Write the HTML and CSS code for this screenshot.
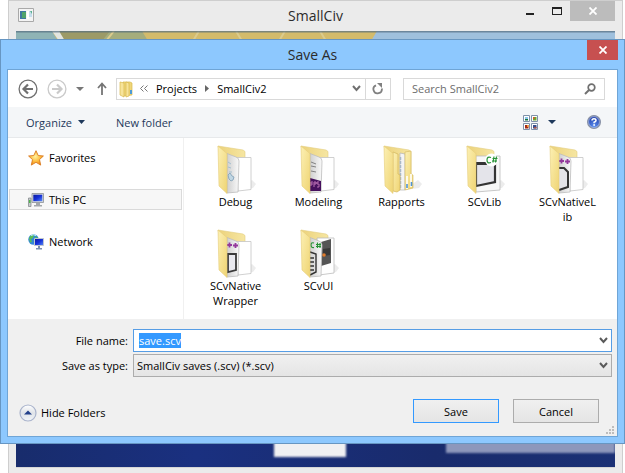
FILE: index.html
```html
<!DOCTYPE html>
<html lang="en">
<head>
<meta charset="utf-8">
<title>SmallCiv</title>
<link rel="stylesheet" href="styles.css">
</head>
<body>
<svg class="defs" aria-hidden="true">
  <defs>
    <linearGradient id="leaf" x1="0" y1="0" x2="1" y2="1"><stop offset="0" stop-color="#fcf0b4"/><stop offset="1" stop-color="#efd473"/></linearGradient>
    <linearGradient id="back" x1="0" y1="0" x2="1" y2="0"><stop offset="0" stop-color="#ecd27b"/><stop offset="1" stop-color="#f6e6a2"/></linearGradient>
    <linearGradient id="shade" x1="0" y1="0" x2="1" y2="0"><stop offset="0" stop-color="#cfcfcf"/><stop offset="1" stop-color="#fafafa"/></linearGradient>
    <linearGradient id="screen" x1="0" y1="0" x2="1" y2="1"><stop offset="0" stop-color="#0a1a9c"/><stop offset=".5" stop-color="#1530d8"/><stop offset="1" stop-color="#5b8cf5"/></linearGradient>
    <radialGradient id="star" cx=".45" cy=".4" r=".6"><stop offset="0" stop-color="#fff3a0"/><stop offset=".6" stop-color="#fdbb3c"/><stop offset="1" stop-color="#f08a1c"/></radialGradient>
    <radialGradient id="help" cx=".5" cy=".8" r=".8"><stop offset="0" stop-color="#5a8df0"/><stop offset="1" stop-color="#1b36a0"/></radialGradient>
    <linearGradient id="round" x1="0" y1="0" x2="0" y2="1"><stop offset="0" stop-color="#ffffff"/><stop offset=".5" stop-color="#dfe3e8"/><stop offset="1" stop-color="#f2f5f8"/></linearGradient>
    <g id="folder-back">
      <path d="M22 46 37 44 40 40 36 36z" fill="#ececec"/>
      <path d="M2 2 27 6 29 7.500V44L11 46z" fill="url(#back)" stroke="#e3cd7e" stroke-width=".6"/>
    </g>
    <path id="folder-leaf" d="M2 2 11 9.500V49.500L3 42z" fill="url(#leaf)" stroke="#e5cd79" stroke-width=".6"/>
    <g id="sheet-right"><path d="M19 13.500H35V45.500L22 47z" fill="#fff" stroke="#c4c4c4" stroke-width=".8"/></g>
    <path id="sheet-mid" d="M11 9.500 20 13Q23 14 23 17L22 48 11 49z" fill="url(#shade)" stroke="#bcbcbc" stroke-width=".8"/>
    <g id="pluses" stroke="#93399c" stroke-width="1.800"><path d="M11 17h5M13.500 14.500v5M17 17.500h5M19.500 15v5"/></g>
  </defs>
</svg>

<main class="app-window">
  <header class="app-title">
    <svg width="16" height="14" viewBox="0 0 16 14" aria-hidden="true"><path d="M.5.500h15v13H.500z" fill="#f4f4f4" stroke="#a9a9a9"/><path d="M2 3h6v8H2z" fill="#3e76a0"/><path d="M4 4h4v6H4z" fill="#4fa36a"/><path d="M9 3h2v8H9z" fill="#fff"/><path d="M11 3h3v6h-3z" fill="#c5ddec"/><path d="M12 3h2v3z" fill="#58b08e"/></svg>
    <h1>SmallCiv</h1>
    <div class="window-buttons">
      <button type="button" aria-label="Minimize"><svg width="10" height="10" viewBox="0 0 10 10"><path d="M1 7h8v2H1z" fill="#222"/></svg></button>
      <button type="button" aria-label="Maximize"><svg width="10" height="10" viewBox="0 0 10 10"><path d="M0 1h10v8H0zM1 3v5h8V3z" fill="#222" fill-rule="evenodd"/></svg></button>
      <button type="button" class="close muted" aria-label="Close"><svg width="8" height="8" viewBox="0 0 8 8"><path d="M.500.500 7.500 7.500M7.500.500.500 7.500" stroke="#fff" stroke-width="1.800"/></svg></button>
    </div>
  </header>
  <div class="game">
    <div class="terrain">
      <svg width="100%" height="10" viewBox="0 0 599 10" preserveAspectRatio="none" aria-hidden="true">
        <path d="M0 0h599v10H0z" fill="#9fc0dd"/><path d="M0 0h361l-6 10H0z" fill="#d3bb6b"/><path d="M90 0h36l6 10H84z" fill="#a5ad7c"/><path d="M44 0h50l-8 10H44z" fill="#9c9a67"/><path d="M0 0h36l6 10H0z" fill="#8fb3b5"/><path d="M36 0h7l6 10h-6z" fill="#e3e5e0"/><path d="M98 0 90 10M183 0l-6 10M269 0l-6 10M220 0l6 10M304 0l6 10" stroke="#dccb8c" stroke-width="2"/>
        <path d="M0 0h599v1.500H0z" fill="#556e80" opacity=".7"/>
      </svg>
    </div>
    <div class="sea"><span class="panel caption"></span><span class="panel status"></span></div>
  </div>
</main>

<section class="dialog" role="dialog" aria-labelledby="dialog-title">
  <header class="dialog-title">
    <h2 id="dialog-title">Save As</h2>
    <button type="button" class="close" aria-label="Close"><svg width="8" height="8" viewBox="0 0 8 8"><path d="M.500.500 7.500 7.500M7.500.500.500 7.500" stroke="#fff" stroke-width="1.800"/></svg></button>
  </header>
  <form class="content">
    <nav class="location">
      <button type="button" class="plain" aria-label="Back"><svg width="20" height="20" viewBox="0 0 20 20" fill="none" stroke="#707070"><circle cx="10" cy="10" r="8.900" stroke-width="1.300"/><path d="M15 10H6M10 5.500 5.500 10l4.500 4.500" stroke-width="2.200"/></svg></button>
      <button type="button" class="plain" aria-label="Forward"><svg width="20" height="20" viewBox="0 0 20 20" fill="none" stroke="#cacaca"><circle cx="10" cy="10" r="8.900" stroke-width="1.300"/><path d="M5 10h9M10 5.500l4.500 4.500-4.500 4.500" stroke-width="2.200"/></svg></button>
      <button type="button" class="plain" aria-label="Recent locations"><svg width="8" height="4" viewBox="0 0 8 4"><path d="M0 0h8L4 4z" fill="#777"/></svg></button>
      <button type="button" class="plain" aria-label="Up"><svg width="10" height="14" viewBox="0 0 10 14" fill="none" stroke="#757575" stroke-width="1.800"><path d="M5 13V2M1 6l4-4.500L9 6"/></svg></button>
      <div class="address">
        <svg width="15" height="18" viewBox="0 0 15 18" aria-hidden="true"><path d="M4 2h7l2 1v12l-9 1z" fill="#efd679" stroke="#d8b94d" stroke-width=".7"/><path d="M1 2 5 3v14l-4-2zM7 2l3 1v13l-3 1z" fill="#f7e49a" stroke="#d8b94d" stroke-width=".7"/><path d="M11 10h2v4h-2z" fill="#4d9ad5"/></svg>
        <svg class="chevrons" width="8" height="7" viewBox="0 0 8 7" fill="none" stroke="#777" aria-hidden="true"><path d="M3.500.500l-3 3 3 3M7.500.500l-3 3 3 3"/></svg>
        <a href="#projects">Projects</a>
        <svg width="4" height="7" viewBox="0 0 4 7" aria-hidden="true"><path d="M0 0 4 3.500 0 7z" fill="#666"/></svg>
        <a href="#smallciv2">SmallCiv2</a>
        <button type="button" class="plain history" aria-label="Previous locations"><svg width="9" height="7" viewBox="0 0 9 7" fill="none" stroke="#707070" stroke-width="2"><path d="M1 1l3.500 4L8 1"/></svg></button>
        <button type="button" class="plain refresh" aria-label="Refresh"><svg width="12" height="12" viewBox="0 0 12 12" fill="none"><path d="M4 2.300A4.200 4.200 0 1 0 9.800 5.500" stroke="#808080" stroke-width="1.800"/><path d="M5 0h5v5z" fill="#808080"/></svg></button>
      </div>
      <div class="search">
        <input type="search" placeholder="Search SmallCiv2" aria-label="Search SmallCiv2">
        <svg width="12" height="12" viewBox="0 0 12 12" fill="none" stroke="#707070" aria-hidden="true"><circle cx="7.500" cy="4.500" r="3.300" stroke-width="1.700"/><path d="M5 7 1 11" stroke-width="2"/></svg>
      </div>
    </nav>

    <div class="toolbar">
      <button type="button" class="plain">Organize <svg width="7" height="4" viewBox="0 0 7 4"><path d="M0 0h7L3.500 4z" fill="#1e395b"/></svg></button>
      <button type="button" class="plain">New folder</button>
      <span class="spacer"></span>
      <button type="button" class="plain view" aria-label="Change view">
        <svg width="15" height="15" viewBox="0 0 15 15"><path d="M.500.500h6v6h-6zM8.500.500h6v6h-6zM.500 8.500h6v6h-6zM8.500 8.500h6v6h-6z" fill="#fff" stroke="#7f91aa"/><path d="M2 2h3v2H2z" fill="#8bc5e8"/><path d="M2 4h3v1.500H2z" fill="#17743b"/><path d="M10 2h3.500v3.500H10z" fill="#6ca832"/><path d="M10 2h1.500v2H10z" fill="#d4562c"/><path d="M2 10h3.500v3.500H2z" fill="#a42917"/><path d="M4 10h1.500v2H4z" fill="#f09a31"/><path d="M10 10h3.500v3.500H10z" fill="#3a4d8c"/><path d="M11 12h2.500v1.500H11z" fill="#a54d45"/></svg>
        <svg width="8" height="4" viewBox="0 0 8 4"><path d="M0 0h8L4 4z" fill="#1e395b"/></svg>
      </button>
      <button type="button" class="plain" aria-label="Help"><svg width="14" height="14" viewBox="0 0 14 14"><circle cx="7" cy="7" r="6.400" fill="url(#help)" stroke="#8b93a5" stroke-width="1.200"/><circle cx="7" cy="7" r="5.400" fill="none" stroke="#c4d2ee" stroke-width=".6"/><path d="M5 5.500Q5 3.700 7 3.700T9 5.400Q9 6.400 7.100 7.300v1" fill="none" stroke="#fff" stroke-width="1.500"/><circle cx="7.100" cy="10" r=".9" fill="#fff"/></svg></button>
    </div>

    <div class="browser">
      <ul class="places">
        <li><a href="#favorites"><svg width="16" height="16" viewBox="0 0 16 16"><path d="M8 .700 10.200 5.500l5.200.500-3.900 3.600 1.200 5.500L8 12.300l-4.700 2.800 1.200-5.500L.600 6l5.200-.500z" fill="url(#star)" stroke="#d97a20" stroke-width=".9"/></svg>Favorites</a></li>
        <li><a href="#pc" class="current"><svg width="16" height="16" viewBox="0 0 16 16"><path d="M4 1.500h11.500v9H4z" fill="#d5d8dc" stroke="#8c9196" stroke-width=".8"/><path d="M5.300 2.700h9v6.500h-9z" fill="url(#screen)"/><path d="M8 11h4v2H8zM6 13h8v1.500H6z" fill="#a3a7ab"/><path d="M.500 6H3v8.500H.500z" fill="#c7cacd" stroke="#7d8185" stroke-width=".7"/><path d="M1 8h1.500v3H1z" fill="#4fb54b"/></svg>This PC</a></li>
        <li><a href="#network"><svg width="16" height="16" viewBox="0 0 16 16"><circle cx="5.500" cy="5.500" r="5.200" fill="#3287d8"/><path d="M1 4Q3 0 6 1L5 4 3 5 4 8 2 8.500zM7 2l3 2-2 3z" fill="#58bd55"/><path d="M3 1.500Q5 0 8 1.500" stroke="#cbefff" fill="none"/><path d="M6.500 4.500h9v7h-9z" fill="url(#screen)" stroke="#c0c6cf"/><path d="M10 12h2v2h-2zM8 14h6v1.500H8z" fill="#7c8fae"/></svg>Network</a></li>
      </ul>
      <ul class="files">
        <li><a href="#debug"><svg width="40" height="50" viewBox="0 0 40 50"><use href="#folder-back"/><use href="#sheet-right"/><use href="#sheet-mid"/><path d="M12 18l3 2M12 23l3 1M13 28h3" stroke="#a4bfd0"/><path d="M12 31l2-2 2 3 2 1-1 3-2 1-2-2z" fill="#c0d6e3" stroke="#7d9eb5" stroke-width=".8"/><use href="#folder-leaf"/></svg>Debug</a></li>
        <li><a href="#modeling"><svg width="40" height="50" viewBox="0 0 40 50"><use href="#folder-back"/><use href="#sheet-right"/><use href="#sheet-mid"/><path d="M12 18l5 2M12 22l5 1M12 27l5 1" stroke="#777" stroke-width=".9"/><path d="M11 34l11 3v10H11z" fill="#46105e"/><path d="M12 38v4m0-4h2m-2 2h2m1 3v-5h2v2h-2m5-2h-2v2h2v3h-2" stroke="#c679bc" fill="none" stroke-width=".9"/><use href="#folder-leaf"/></svg>Modeling</a></li>
        <li><a href="#rapports"><svg width="40" height="50" viewBox="0 0 40 50"><use href="#folder-back"/><path d="M18 9l5 1v36h-5z" fill="#f4f4f4" stroke="#b5b5b5" stroke-width=".7"/><path d="M18.500 13v32" stroke="#a9b8c6" stroke-width="1.500" stroke-dasharray="3 1"/><path d="M23 8l6-1v23l2 1v13l-8 2z" fill="url(#leaf)" stroke="#d2b65c" stroke-width=".6"/><path d="M25 32v13M29 30v13" stroke="#fff" stroke-width="1.600"/><path d="M25 40v4M29.500 38v4" stroke="#4f93d4" stroke-width="1.600"/><path d="M11 8l5 2v20l2 1v15l-3 2-4-1z" fill="url(#leaf)" stroke="#d2b65c" stroke-width=".7"/><use href="#folder-leaf"/></svg>Rapports</a></li>
        <li><a href="#scvlib"><svg width="40" height="50" viewBox="0 0 40 50"><use href="#folder-back"/><path d="M11 12h24v34l-24 2z" fill="#f7f7f7" stroke="#bbb" stroke-width=".8"/><path d="M11 19h19v19l-19 4z" fill="#e4e4ea" stroke="#343434" stroke-width="2.200"/><path d="M11 18h19v3H11z" fill="#343434"/><circle cx="26.500" cy="16" r="6.500" fill="#fff"/><path d="M26 13.500q-4-1.500-4 2.500t4 2.500M29 12.500l-1 6m3.500-6-1 6m-3-4h5m-5.500 2.500h5" fill="none" stroke="#279336" stroke-width="1.200"/><use href="#folder-leaf"/></svg>SCvLib</a></li>
        <li><a href="#scvnativelib"><svg width="40" height="50" viewBox="0 0 40 50"><use href="#folder-back"/><use href="#sheet-right"/><use href="#sheet-mid"/><path d="M11 24h5l4 4v15l-9 3" fill="#e4e4e8" stroke="#343434" stroke-width="2"/><use href="#pluses"/><use href="#folder-leaf"/></svg>SCvNativeL<br>ib</a></li>
        <li><a href="#scvnativewrapper"><svg width="40" height="50" viewBox="0 0 40 50"><use href="#folder-back"/><use href="#sheet-right"/><use href="#sheet-mid"/><path d="M12 26h8v16l-8 2z" fill="#e9e9ef" stroke="#3b3b3b" stroke-width="1.800"/><use href="#pluses"/><use href="#folder-leaf"/></svg>SCvNative<br>Wrapper</a></li>
        <li><a href="#scvui"><svg width="40" height="50" viewBox="0 0 40 50"><use href="#folder-back"/><path d="M18 10h17v35l-15 2z" fill="#fff" stroke="#bbb" stroke-width=".8"/><path d="M22 14l10-3v24l-10 3z" fill="#555"/><path d="M24 21l7-1v7l-7 1z" fill="#393939"/><circle cx="25" cy="27" r="1.800" fill="#e07b2c"/><use href="#sheet-mid"/><path d="M11 24l6 2v18l-6 3M11 30h4m-4 4h4m-4 4h4m-4 4h4" fill="none" stroke="#333" stroke-width="1.400"/><path d="M15 15q-3-1-3 2t3 2.500M18.500 14.500v5.500m2.500-5v5m-4-3.500h5m-5 2h5" fill="none" stroke="#279336" stroke-width="1.200"/><use href="#folder-leaf"/></svg>SCvUI</a></li>
      </ul>
    </div>

    <footer class="save-panel">
      <div class="fields">
        <label for="filename">File name:</label>
        <div class="combo">
          <input id="filename" type="text" value="save.scv" autocomplete="off">
          <svg width="9" height="7" viewBox="0 0 9 7" fill="none" stroke="#5a5a5a" stroke-width="2" aria-hidden="true"><path d="M1 1l3.500 4L8 1"/></svg>
        </div>
        <label for="filetype">Save as type:</label>
        <div class="combo">
          <select id="filetype"><option>SmallCiv saves (.scv) (*.scv)</option></select>
          <svg width="9" height="7" viewBox="0 0 9 7" fill="none" stroke="#5a5a5a" stroke-width="2" aria-hidden="true"><path d="M1 1l3.500 4L8 1"/></svg>
        </div>
      </div>
      <div class="actions">
        <button type="button" class="plain toggle"><svg width="18" height="18" viewBox="0 0 18 18"><circle cx="9" cy="9" r="8" fill="url(#round)" stroke="#aab4cc" stroke-width="1.200"/><path d="M5 10.500 9 6.500l4 4z" fill="#23408a"/></svg>Hide Folders</button>
        <button type="button" class="push primary">Save</button>
        <button type="button" class="push">Cancel</button>
      </div>
      <svg class="grip" width="8" height="8" viewBox="0 0 8 8" aria-hidden="true"><path d="M6 0h2v2H6zM3 3h2v2H3zM6 3h2v2H6zM0 6h2v2H0zM3 6h2v2H3zM6 6h2v2H6z" fill="#bdbdbd"/></svg>
    </footer>
  </form>
</section>
<script src="script.js"></script>
</body>
</html>
```

FILE: styles.css
```css
* {
  box-sizing: border-box;
}

body {
  margin: 0;
  min-height: 100vh;
  display: flex;
  position: relative;
  overflow: hidden;
  background: #fff;
  color: #000;
  font: 11px/15px "Open Sans", "Noto Sans", sans-serif;
}

button,
input,
select {
  font: inherit;
  color: inherit;
}

button {
  padding: 0;
  border: 0;
  background: none;
}

svg {
  display: block;
  flex: none;
}

ul {
  list-style: none;
  margin: 0;
  padding: 0;
}

a {
  color: inherit;
  text-decoration: none;
}

h1,
h2 {
  margin: 0;
  font-size: 14px;
  line-height: 20px;
  font-weight: 400;
  color: #2b2b2b;
}

.defs {
  position: absolute;
  width: 0;
  height: 0;
}

/* Main application window */

.app-window {
  flex: 1;
  margin: 0 2px 0 8px;
  padding: 0 7px;
  display: flex;
  flex-direction: column;
  border: 1px solid #cecece;
  border-bottom: 0;
  background: #ebebeb;
}

.app-title {
  position: relative;
  display: flex;
  justify-content: space-between;
  height: 30px;
  padding-left: 2px;
}

.app-title > svg {
  margin-top: 7px;
}

.app-title h1 {
  position: absolute;
  inset: 5px 0 auto;
  text-align: center;
}

.window-buttons {
  position: relative;
  display: flex;
  height: 20px;
}

.window-buttons button {
  width: 27px;
  display: grid;
  place-items: center;
}

.window-buttons .close.muted {
  width: 45px;
  background: #bcbcbc;
}

.game {
  flex: 1;
  display: flex;
  flex-direction: column;
  margin-bottom: 5px;
  border-bottom: 1px solid #d6d6d6;
}

.sea {
  flex: 1;
  position: relative;
  overflow: hidden;
  background: linear-gradient(90deg, #182c6c, #1a3080 30%, #192b6c 70%, #1b3175);
}

.panel {
  position: absolute;
  filter: blur(1px);
}

.caption {
  left: 258px;
  bottom: 10px;
  width: 72px;
  height: 40px;
  background: #f0f0f2;
}

.status {
  right: 0;
  bottom: 14px;
  width: 169px;
  height: 40px;
  background: #8d97bb;
}

/* Save dialog */

.dialog {
  position: absolute;
  inset: 39px 0 29px;
  display: flex;
  flex-direction: column;
  padding: 0 6px 6px;
  border: 1px solid #6796c2;
  background: #8dc8fe;
}

.dialog-title {
  position: relative;
  height: 29px;
  padding-top: 5px;
  text-align: center;
}

.dialog-title .close {
  position: absolute;
  top: 0;
  right: 0;
  width: 31px;
  height: 20px;
  display: grid;
  place-items: center;
  background: #c75050;
}

.content {
  flex: 1;
  display: flex;
  flex-direction: column;
  border: 1px solid #6fa5d6;
  background: #fff;
}

.location {
  display: flex;
  align-items: center;
  gap: 9px;
  height: 37px;
  padding: 0 12px 0 10px;
}

.location > .plain:nth-child(4) {
  margin-left: 4px;
}

.address {
  flex: 1 1 275px;
  display: flex;
  align-items: center;
  gap: 8px;
  height: 22px;
  padding-left: 2px;
  border: 1px solid #d9d9d9;
}

.address .chevrons {
  margin-left: -2px;
}

.history {
  margin-left: auto;
}

.refresh {
  width: 25px;
  height: 20px;
  display: grid;
  place-items: center;
  margin-left: -4px;
  border-left: 1px solid #d9d9d9;
}

.search {
  flex: 1 1 202px;
  display: flex;
  align-items: center;
  height: 22px;
  margin-left: 3px;
  padding: 0 8px;
  border: 1px solid #d9d9d9;
}

.search input {
  flex: 1;
  min-width: 0;
  padding: 0;
  border: 0;
  outline: 0;
  background: none;
  appearance: none;
}

.search input::placeholder {
  color: #6d6d6d;
}

.toolbar {
  display: flex;
  align-items: center;
  gap: 31px;
  height: 31px;
  padding: 0 16px 0 18px;
  border-bottom: 1px solid #e7e9eb;
  background: #f4f6f8;
  color: #1e395b;
}

.toolbar button {
  display: flex;
  align-items: center;
  gap: 6px;
}

.toolbar .view {
  gap: 10px;
}

.spacer {
  flex: 1;
}

.browser {
  flex: 1;
  display: grid;
  grid-template-columns: 176px 1fr;
}

.places {
  display: flex;
  flex-direction: column;
  gap: 21px;
  padding: 9px 1px;
  border-right: 1px solid #f0f0f0;
}

.places a {
  display: flex;
  align-items: center;
  gap: 5px;
  height: 21px;
  padding-left: 18px;
  border: 1px solid transparent;
}

.places .current {
  border-color: #dadada;
  background: #f7f7f7;
}

.files {
  display: grid;
  grid-template-columns: repeat(auto-fill, 83px);
  align-content: start;
  gap: 4px 0;
  padding: 6px 7px 0 10px;
}

.files a {
  display: flex;
  flex-direction: column;
  align-items: center;
  text-align: center;
}

.save-panel {
  position: relative;
  padding: 10px 5px 13px 10px;
  background: #f0f0f0;
}

.fields {
  display: grid;
  grid-template-columns: 110px 1fr;
  align-items: center;
  gap: 2px 5px;
}

.fields label {
  text-align: right;
}

.combo {
  position: relative;
}

.combo input,
.combo select {
  display: block;
  width: 100%;
  height: 23px;
  margin: 0;
  padding: 0 20px 0 5px;
  border: 1px solid #569de5;
  border-radius: 0;
  outline: 0;
  background: #fff;
  appearance: none;
}

.combo select {
  padding-left: 3px;
  border-color: #acacac;
  background: linear-gradient(#f0f0f0, #e5e5e5);
}

.combo svg {
  position: absolute;
  top: 8px;
  right: 4px;
  pointer-events: none;
}

.combo input::selection {
  background: #3399ff;
  color: #fff;
}

.actions {
  display: flex;
  align-items: center;
  gap: 14px;
  padding: 22px 13px 0 1px;
}

.toggle {
  display: flex;
  align-items: center;
  gap: 4px;
  margin: 3px auto 0 0;
}

.push {
  width: 86px;
  height: 24px;
  border: 1px solid #acacac;
  background: linear-gradient(#f0f0f0, #e5e5e5);
}

.push.primary {
  border-color: #3399ff;
}

.grip {
  position: absolute;
  right: 3px;
  bottom: 2px;
}
```

FILE: script.js
```js
const filename = document.getElementById("filename");
filename.focus();
filename.select();
```
